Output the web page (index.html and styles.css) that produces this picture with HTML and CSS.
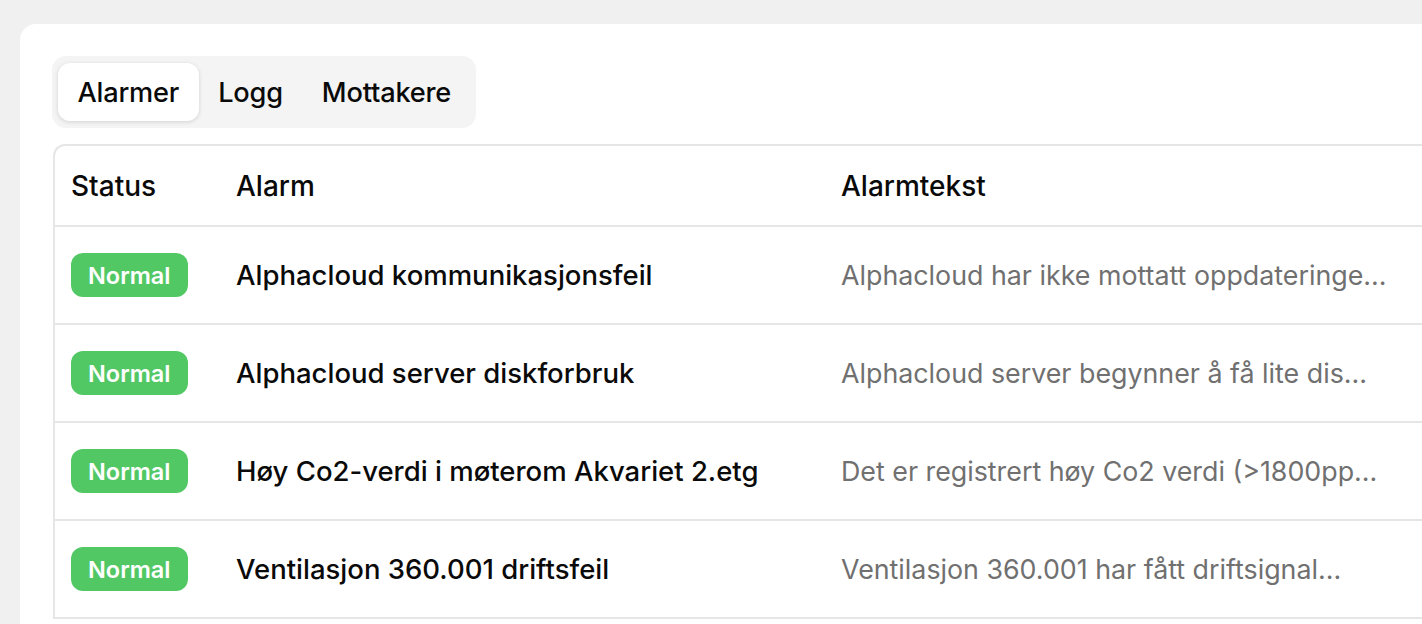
FILE: index.html
```html
<!DOCTYPE html>
<html lang="no">
<head>
<meta charset="utf-8">
<title>Alarmer</title>
<link rel="stylesheet" href="styles.css">
</head>
<body>
<div class="card">
  <div class="tabs">
    <div class="tab active">Alarmer</div>
    <div class="tab">Logg</div>
    <div class="tab">Mottakere</div>
  </div>
  <div class="table">
    <div class="row head">
      <div class="cell">Status</div>
      <div class="cell">Alarm</div>
      <div class="cell">Alarmtekst</div>
    </div>
    <div class="row">
      <div class="cell"><span class="badge">Normal</span></div>
      <div class="cell name">Alphacloud kommunikasjonsfeil</div>
      <div class="cell desc">Alphacloud har ikke mottatt oppdateringe...</div>
    </div>
    <div class="row">
      <div class="cell"><span class="badge">Normal</span></div>
      <div class="cell name">Alphacloud server diskforbruk</div>
      <div class="cell desc">Alphacloud server begynner å få lite dis...</div>
    </div>
    <div class="row">
      <div class="cell"><span class="badge">Normal</span></div>
      <div class="cell name">Høy Co2-verdi i møterom Akvariet 2.etg</div>
      <div class="cell desc">Det er registrert høy Co2 verdi (&gt;1800pp...</div>
    </div>
    <div class="row">
      <div class="cell"><span class="badge">Normal</span></div>
      <div class="cell name">Ventilasjon 360.001 driftsfeil</div>
      <div class="cell desc">Ventilasjon 360.001 har fått driftsignal...</div>
    </div>
  </div>
</div>
</body>
</html>
```
FILE: styles.css
```css
* { box-sizing: border-box; }
html, body { margin: 0; padding: 0; }
body {
  background: #f0f0f0;
  font-family: Inter, "Noto Sans", sans-serif;
  color: #0a0a0a;
  overflow: hidden;
  height: 624px;
  padding: 24px 0 0 20px;
}
.card {
  background: #fff;
  width: 1500px;
  height: 800px;
  border-radius: 16px;
  padding: 32px;
}
.tabs {
  display: inline-flex;
  background: #f4f4f4;
  border-radius: 14px;
  padding: 7px 5px 7px 6px;
}
.tab {
  height: 58px;
  display: flex;
  align-items: center;
  padding: 0 19.5px;
  font-size: 27.2px;
  font-weight: 500;
  border-radius: 12px;
  letter-spacing: -0.2px;
}
.tab.active {
  background: #fff;
  box-shadow: 0 1px 4px rgba(0,0,0,0.14);
}
.table {
  margin-top: 16px;
  border: 2px solid #e6e6e6;
  border-right: none;
  border-radius: 12px 0 0 0;
  margin-left: 1px;
}
.row {
  display: grid;
  grid-template-columns: 165px 605px 1fr;
  align-items: center;
  height: 98px;
  border-top: 2px solid #e6e6e6;
}
.row.head {
  height: 79px;
  border-top: none;
}
.cell {
  padding: 0 16px;
  font-size: 27.5px;
  font-weight: 500;
  white-space: nowrap;
}
.head .cell { font-size: 28px; }
.desc {
  color: #707070;
  font-weight: 400;
  font-size: 26.8px;
}
.badge {
  display: inline-flex;
  align-items: center;
  height: 44px;
  padding: 0 17px 0 17px;
  background: #52c865;
  color: #fff;
  border-radius: 12px;
  font-size: 23.5px;
  font-weight: 600;
}
```
